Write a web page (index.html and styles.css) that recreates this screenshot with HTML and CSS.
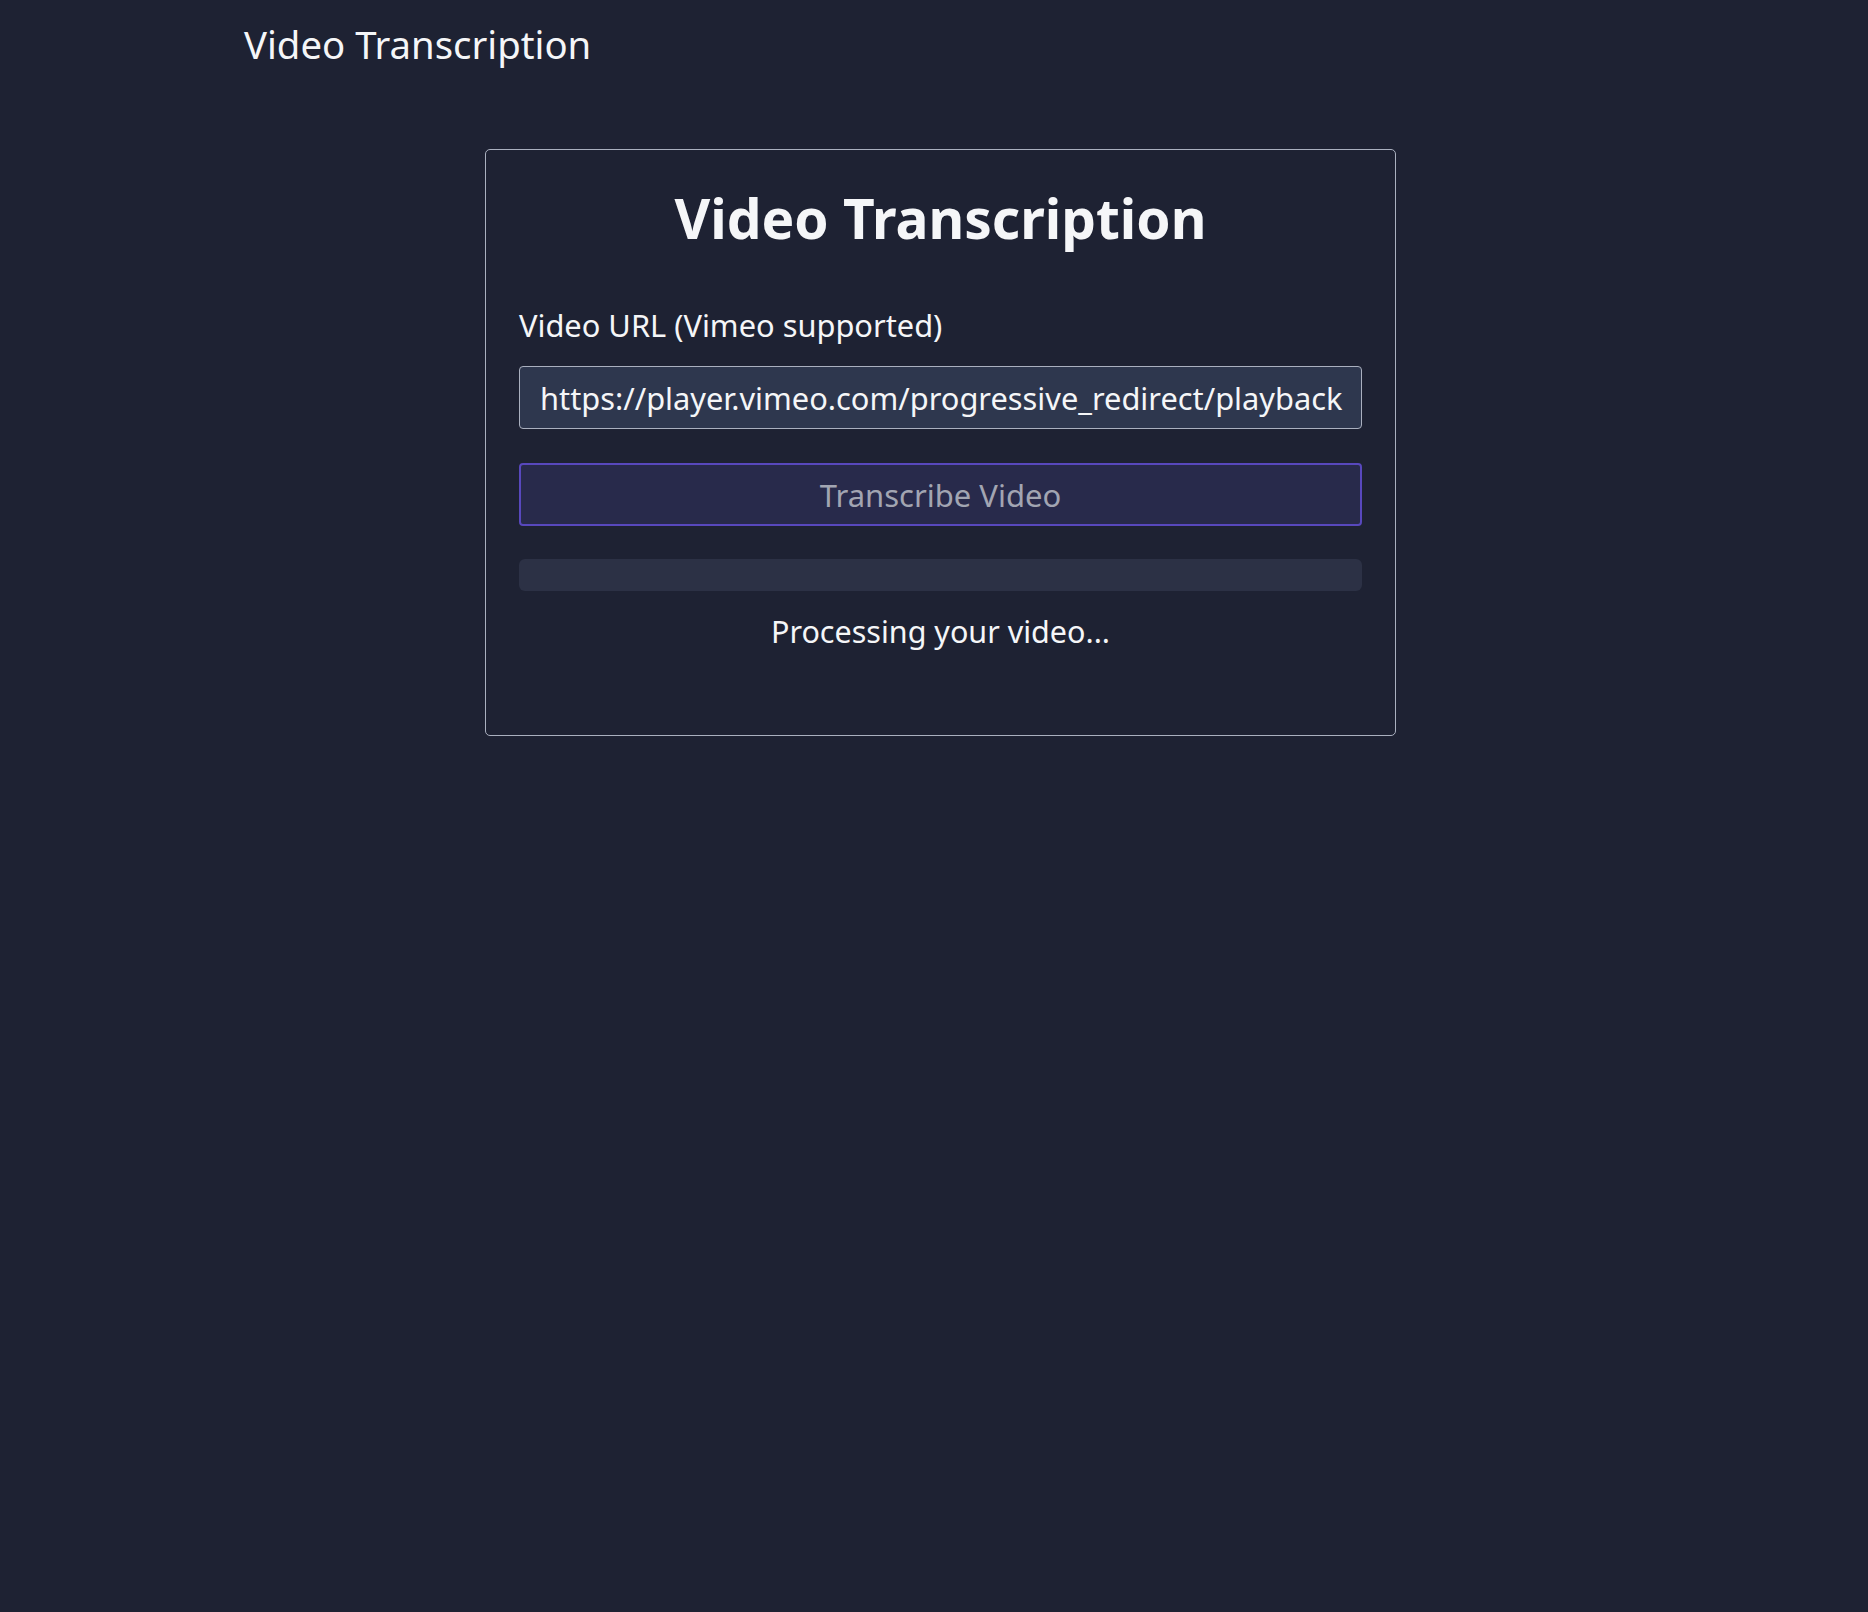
FILE: index.html
```html
<!DOCTYPE html>
<html lang="en">
<head>
<meta charset="utf-8">
<title>Video Transcription</title>
<link rel="stylesheet" href="styles.css">
</head>
<body>
<header class="topbar">
  <div class="brand">Video Transcription</div>
</header>
<main class="main">
  <section class="card">
    <h1 class="card-title">Video Transcription</h1>
    <label class="field-label" for="url">Video URL (Vimeo supported)</label>
    <input class="url-input" id="url" type="text" value="https://player.vimeo.com/progressive_redirect/playback">
    <button class="submit-btn" type="button" disabled>Transcribe Video</button>
    <div class="progress"><div class="progress-fill"></div></div>
    <p class="status">Processing your video...</p>
  </section>
</main>
</body>
</html>
```
FILE: styles.css
```css
html, body {
  margin: 0;
  padding: 0;
  background: #1e2233;
  color: #f5f6f8;
  font-family: "Noto Sans", "Open Sans", sans-serif;
}

.topbar {
  padding: 19px 0 0 244px;
  height: 69px;
  box-sizing: border-box;
}

.brand {
  font-size: 38.3px;
  line-height: 50px;
  color: #f5f6f8;
}

.main {
  display: flex;
  justify-content: center;
  padding: 80px 0 0 13px;
}

.card {
  width: 911px;
  box-sizing: border-box;
  border: 1.5px solid #aab0bf;
  border-radius: 5px;
  padding: 33px 33px 33px 33px;
  display: flex;
  flex-direction: column;
}

.card-title {
  margin: 0 0 52px;
  font-size: 55px;
  line-height: 70px;
  font-weight: 700;
  text-align: center;
  color: #f5f6f8;
}

.field-label {
  font-size: 30.8px;
  line-height: 40px;
  margin-bottom: 21px;
}

.url-input {
  height: 63px;
  box-sizing: border-box;
  width: 100%;
  background: #2e374e;
  border: 1.5px solid #aab0bf;
  border-radius: 4px;
  padding: 0 16px 0 20px;
  color: #f5f6f8;
  font-family: inherit;
  font-size: 30.8px;
  outline: none;
}

.submit-btn {
  margin-top: 34px;
  height: 63px;
  box-sizing: border-box;
  width: 100%;
  background: #282a4b;
  border: 2px solid #5848bd;
  border-radius: 4px;
  color: #a2a5b2;
  font-family: inherit;
  font-size: 31px;
}

.progress {
  margin-top: 33px;
  height: 32px;
  border-radius: 6px;
  background: #2c3145;
  overflow: hidden;
}

.progress-fill {
  width: 0;
  height: 100%;
}

.status {
  margin: 20px 0 51px;
  font-size: 30.5px;
  line-height: 40px;
  text-align: center;
}
```
